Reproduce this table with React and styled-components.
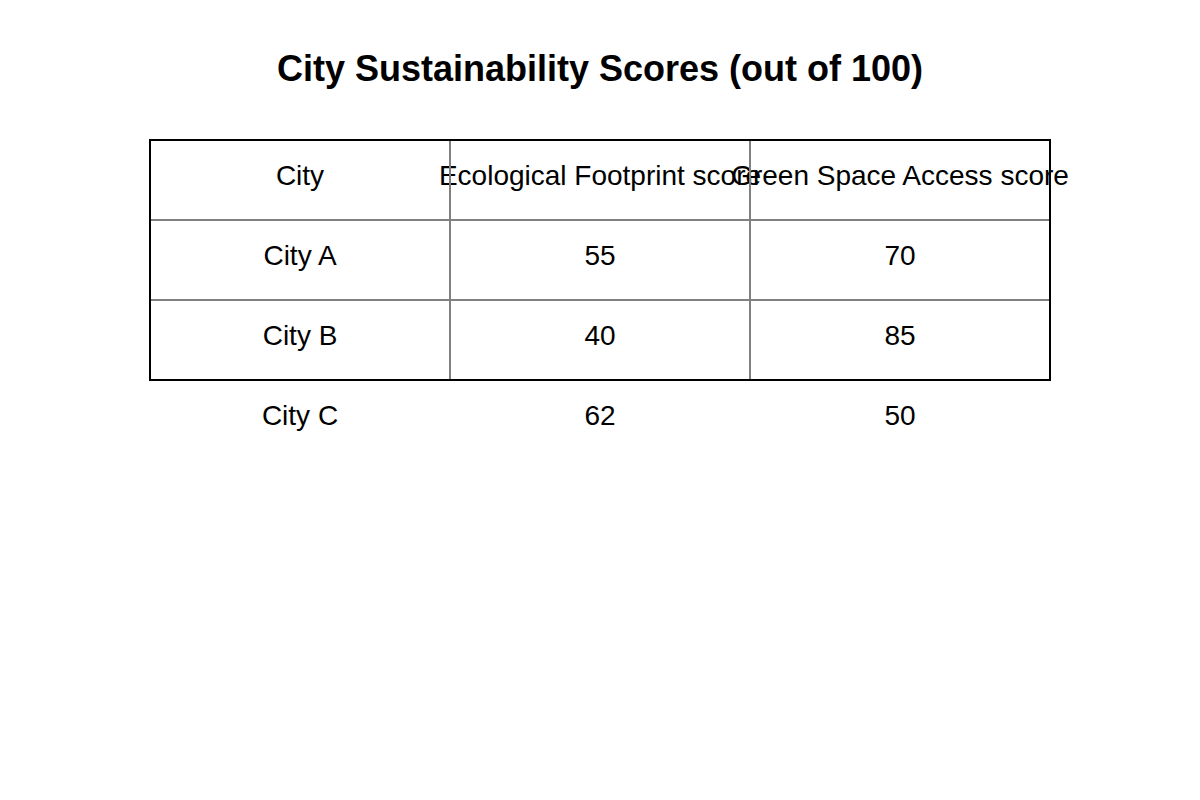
import styled, { createGlobalStyle } from "styled-components";

const GlobalStyle = createGlobalStyle`
  html, body {
    margin: 0;
    padding: 0;
    background: #ffffff;
  }
  body {
    font-family: "Liberation Sans", Arial, sans-serif;
    color: #000000;
  }
`;

const Page = styled.div`
  width: 1200px;
  height: 800px;
  display: flex;
  flex-direction: column;
  align-items: center;
`;

const Title = styled.h1`
  margin: 48px 0 0;
  font-size: 36px;
  line-height: 42px;
  font-weight: 700;
`;

const Table = styled.div`
  margin-top: 50px;
  width: 900px;
  display: flex;
  flex-direction: column;
`;

// rows inside the framed area; the frame is drawn over the text like the plot it came from
const Framed = styled.div`
  position: relative;
  &::after {
    content: "";
    position: absolute;
    inset: -1px;
    border: 2px solid #000;
    z-index: 2;
    pointer-events: none;
  }
`;

const Row = styled.div`
  display: grid;
  grid-template-columns: repeat(3, 300px);
  height: 80px;
  position: relative;
  ${({ $ruled }) =>
    $ruled &&
    `
    &::before {
      content: "";
      position: absolute;
      left: 0;
      right: 0;
      top: -1px;
      height: 2px;
      background: #808080;
      z-index: 1;
    }
  `}
`;

const Cell = styled.div`
  position: relative;
  display: flex;
  align-items: center;
  justify-content: center;
  padding-bottom: 8px;
  box-sizing: border-box;
  font-size: 28px;
  white-space: nowrap;
  ${({ $divider }) =>
    $divider &&
    `
    &::before {
      content: "";
      position: absolute;
      top: 0;
      bottom: 0;
      left: -1px;
      width: 2px;
      background: #808080;
      z-index: 1;
    }
  `}
`;

const Text = styled.span`
  flex-shrink: 0;
`;

const header = ["City", "Ecological Footprint score", "Green Space Access score"];
const rows = [
  ["City A", "55", "70"],
  ["City B", "40", "85"],
  ["City C", "62", "50"],
];

const TableRow = ({ values, ruled, divided }) => (
  <Row $ruled={ruled}>
    {values.map((v, i) => (
      <Cell key={i} $divider={divided && i > 0}>
        <Text>{v}</Text>
      </Cell>
    ))}
  </Row>
);

export default function App() {
  const framed = rows.slice(0, 2);
  const loose = rows.slice(2);

  return (
    <>
      <GlobalStyle />
      <Page>
        <Title>City Sustainability Scores (out of 100)</Title>
        <Table>
          <Framed>
            <TableRow values={header} divided />
            {framed.map((r) => (
              <TableRow key={r[0]} values={r} ruled divided />
            ))}
          </Framed>
          {loose.map((r) => (
            <TableRow key={r[0]} values={r} />
          ))}
        </Table>
      </Page>
    </>
  );
}
